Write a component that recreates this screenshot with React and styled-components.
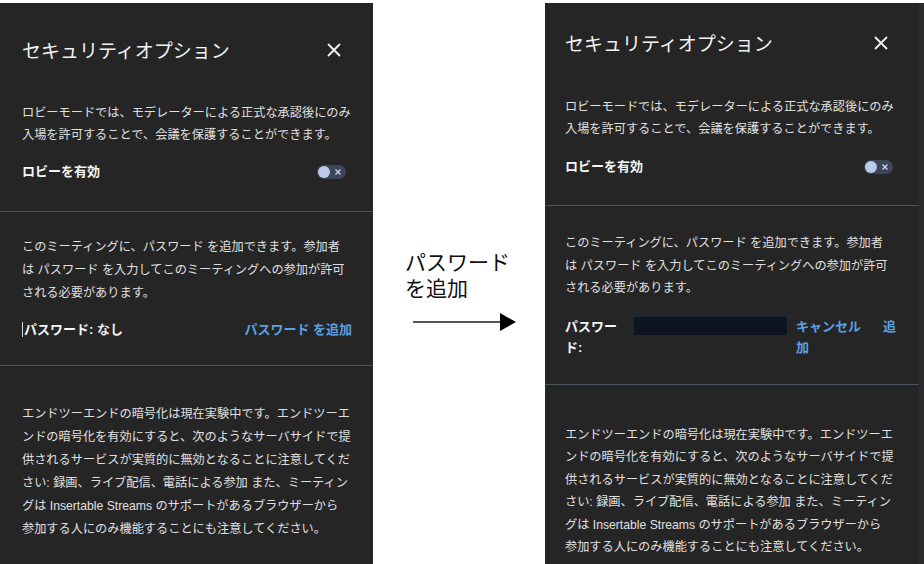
import styled, { createGlobalStyle } from 'styled-components';

const GlobalStyle = createGlobalStyle`
    html, body {
        margin: 0;
        padding: 0;
        background: #fff;
    }
    body {
        font-family: "Liberation Sans", "Noto Sans CJK JP", sans-serif;
    }
`;

const Page = styled.div`
    display: flex;
    align-items: flex-start;
    width: 924px;
    height: 564px;
    padding-top: 3px;
    box-sizing: border-box;
    overflow: hidden;
`;

const Panel = styled.div`
    display: flex;
    flex-direction: column;
    width: ${(props) => props.$width}px;
    height: 561px;
    padding-top: ${(props) => props.$top}px;
    box-sizing: border-box;
    background: #252525;
    color: #e4e4e4;
    overflow: hidden;
    flex-shrink: 0;
`;

const ScrollTrack = styled.div`
    width: 5px;
    height: 561px;
    background: #2b2b2b;
    flex-shrink: 0;
`;

const Header = styled.div`
    display: flex;
    align-items: center;
    justify-content: space-between;
    padding: 0 ${(props) => props.$right}px 0 ${(props) => props.$left}px;
`;

const Title = styled.h2`
    margin: 0;
    font-family: "Noto Sans CJK JP", sans-serif;
    font-size: 19px;
    font-weight: 400;
    line-height: 24px;
    color: #f2f2f2;
`;

const CloseButton = styled.button`
    display: flex;
    padding: 0;
    margin-right: ${(props) => props.$offset}px;
    border: 0;
    background: none;
    cursor: pointer;
`;

const Section = styled.div`
    padding: ${(props) => props.$pt}px ${(props) => props.$right}px ${(props) => props.$pb}px ${(props) => props.$left}px;
    border-bottom: ${(props) => (props.$last ? 'none' : '1px solid #4a525e')};
`;

const Text = styled.p`
    margin: 0;
    font-size: 12.2px;
    line-height: ${(props) => props.$lh}px;
    white-space: nowrap;
    color: #e0e0e0;
`;

const Row = styled.div`
    display: flex;
    align-items: ${(props) => (props.$top ? 'flex-start' : 'center')};
    justify-content: space-between;
    margin-top: ${(props) => props.$mt}px;
    font-size: 13px;
    line-height: ${(props) => props.$lh || 20}px;
`;

const Label = styled.span`
    font-weight: 700;
    color: #f5f5f5;
    width: ${(props) => (props.$width ? `${props.$width}px` : 'auto')};
    flex-shrink: 0;
`;

const Value = styled.span`
    font-weight: 600;
    color: #ececec;
`;

const Caret = styled.span`
    display: inline-block;
    width: 1px;
    height: 15px;
    margin-right: 1px;
    vertical-align: -3px;
    background: #d8d8d8;
`;

const LinkButton = styled.span`
    font-weight: 700;
    color: #5ba0e2;
    cursor: pointer;
    margin-left: ${(props) => props.$gap || 0}px;
    line-break: anywhere;
`;

const Links = styled.div`
    flex: 1;
    min-width: 0;
    margin-left: 8px;
`;

const PasswordInput = styled.input`
    width: 155px;
    height: 20px;
    margin-left: 8px;
    padding: 0 6px;
    box-sizing: border-box;
    border: 1px solid #1c2637;
    border-radius: 2px;
    background: #0e1520;
    color: #fff;
    flex-shrink: 0;
`;

const Track = styled.div`
    display: flex;
    align-items: center;
    justify-content: space-between;
    width: 29px;
    height: 14px;
    margin-right: ${(props) => props.$offset}px;
    padding: 0 5px 0 1px;
    box-sizing: border-box;
    border-radius: 7px;
    background: #3b4658;
`;

const Knob = styled.span`
    width: 12px;
    height: 12px;
    border-radius: 50%;
    background: #bccaea;
`;

const Middle = styled.div`
    display: flex;
    flex-direction: column;
    width: 172px;
    padding: 245px 0 0 32px;
    box-sizing: border-box;
    flex-shrink: 0;
`;

const Caption = styled.div`
    font-family: "Noto Sans CJK JP", sans-serif;
    font-size: 21px;
    line-height: 26px;
    color: #111;
`;

const Arrow = styled.svg`
    margin: 12px 0 0 8px;
`;

const CloseIcon = () => (
    <svg width="14" height="14" viewBox="0 0 14 14">
        <path d="M1.5 1.5 L12.5 12.5 M12.5 1.5 L1.5 12.5" stroke="#f2f2f2" strokeWidth="1.8" strokeLinecap="round" />
    </svg>
);

const Toggle = ({ offset }) => (
    <Track $offset={offset}>
        <Knob />
        <svg width="6" height="6" viewBox="0 0 6 6">
            <path d="M0.5 0.5 L5.5 5.5 M5.5 0.5 L0.5 5.5" stroke="#c9d2e6" strokeWidth="1.4" />
        </svg>
    </Track>
);

const LobbyText = () => (
    <>
        ロビーモードでは、モデレーターによる正式な承認後にのみ<br />
        入場を許可することで、会議を保護することができます。
    </>
);

const PasswordText = () => (
    <>
        このミーティングに、パスワード を追加できます。参加者<br />
        は パスワード を入力してこのミーティングへの参加が許可<br />
        される必要があります。
    </>
);

const E2eeText = () => (
    <>
        エンドツーエンドの暗号化は現在実験中です。エンドツーエ<br />
        ンドの暗号化を有効にすると、次のようなサーバサイドで提<br />
        供されるサービスが実質的に無効となることに注意してくだ<br />
        さい: 録画、ライブ配信、電話による参加 また、ミーティン<br />
        グは Insertable Streams のサポートがあるブラウザーから<br />
        参加する人にのみ機能することにも注意してください。
    </>
);

const App = () => (
    <>
        <GlobalStyle />
        <Page>
            <Panel $width={373} $top={35}>
                <Header $left={22} $right={21}>
                    <Title>セキュリティオプション</Title>
                    <CloseButton $offset={11}><CloseIcon /></CloseButton>
                </Header>
                <Section $pt={40} $pb={29} $left={22} $right={21}>
                    <Text $lh={22}><LobbyText /></Text>
                    <Row $mt={16}>
                        <Label>ロビーを有効</Label>
                        <Toggle offset={6} />
                    </Row>
                </Section>
                <Section $pt={24} $pb={25} $left={22} $right={21}>
                    <Text $lh={23}><PasswordText /></Text>
                    <Row $mt={15}>
                        <span>
                            <Caret />
                            <Label>パスワード: </Label>
                            <Value>なし</Value>
                        </span>
                        <LinkButton>パスワード を追加</LinkButton>
                    </Row>
                </Section>
                <Section $pt={37} $pb={0} $left={22} $right={21} $last>
                    <Text $lh={23}><E2eeText /></Text>
                </Section>
            </Panel>

            <Middle>
                <Caption>パスワード<br />を追加</Caption>
                <Arrow width="104" height="20" viewBox="0 0 104 20">
                    <line x1="0" y1="10" x2="88" y2="10" stroke="#555" strokeWidth="2" />
                    <polygon points="87,1 103,10 87,19" fill="#000" />
                </Arrow>
            </Middle>

            <Panel $width={374} $top={28}>
                <Header $left={20} $right={21}>
                    <Title>セキュリティオプション</Title>
                    <CloseButton $offset={10}><CloseIcon /></CloseButton>
                </Header>
                <Section $pt={41} $pb={28} $left={20} $right={21}>
                    <Text $lh={22}><LobbyText /></Text>
                    <Row $mt={17}>
                        <Label>ロビーを有効</Label>
                        <Toggle offset={5} />
                    </Row>
                </Section>
                <Section $pt={26} $pb={26} $left={20} $right={18}>
                    <Text $lh={22.5}><PasswordText /></Text>
                    <Row $mt={16} $lh={21} $top>
                        <Label $width={60}>パスワード:</Label>
                        <PasswordInput type="password" />
                        <Links>
                            <LinkButton>キャンセル</LinkButton>
                            <LinkButton $gap={22}>追加</LinkButton>
                        </Links>
                    </Row>
                </Section>
                <Section $pt={39} $pb={0} $left={20} $right={21} $last>
                    <Text $lh={22.5}><E2eeText /></Text>
                </Section>
            </Panel>
            <ScrollTrack />
        </Page>
    </>
);

export default App;
